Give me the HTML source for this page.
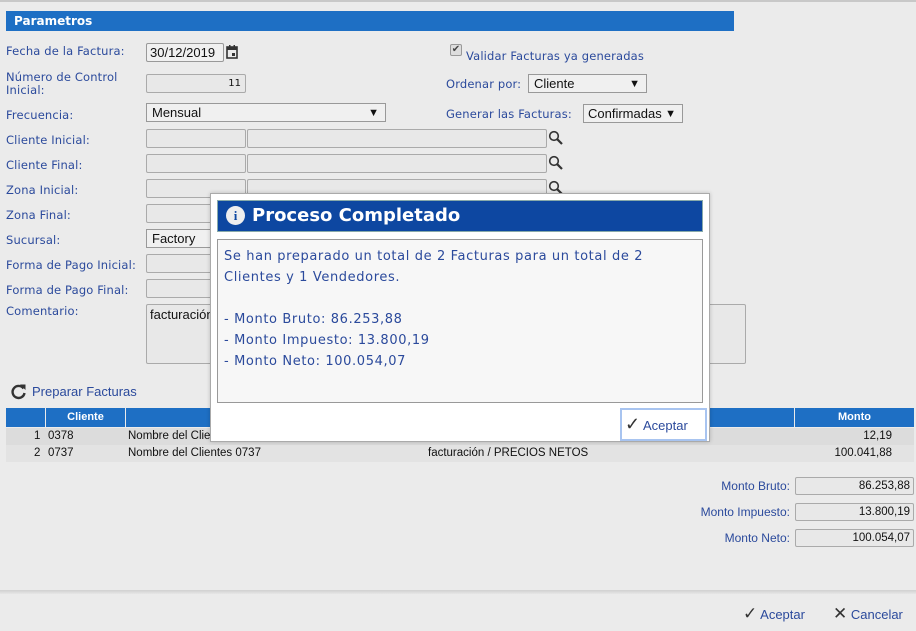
<!DOCTYPE html>
<html><head><meta charset="utf-8"><style>
*{box-sizing:border-box}
body{margin:0;width:916px;height:631px;background:#ebebeb;font-family:"DejaVu Sans","Liberation Sans",sans-serif;font-size:12px;color:#2b4a9c;position:relative;overflow:hidden}
.a{position:absolute}
.lbl{position:absolute;left:6px;font-size:11.5px;color:#2b4a9c;line-height:13px;letter-spacing:0.15px}
.in{position:absolute;border:1px solid #aaa;background:#e8e8e8;border-radius:2px;height:19px}
.sel{position:absolute;border:1px solid #999;background:#f0f0f0;height:19px;font-family:"Liberation Sans",sans-serif;font-size:13px;color:#111;padding:1px 5px;line-height:16px}
.sel:after{content:"▼";position:absolute;right:6px;top:1px;font-size:11px}
.tbl{font-family:"Liberation Sans",sans-serif;font-size:11.5px;color:#111}
.th{position:absolute;top:408px;height:19px;background:#1e6fc4;color:#fff;font-weight:bold;font-family:"Liberation Sans",sans-serif;font-size:11px;text-align:center;line-height:19px}
</style></head><body>
<div class="a" style="left:0;top:0;width:916px;height:2px;background:#c8c8c8"></div>
<div class="a" style="left:6px;top:11px;width:728px;height:20px;background:#1e6fc4;color:#fff;font-weight:bold;font-size:12px;line-height:20px;padding-left:8px">Parametros</div>

<div class="lbl" style="top:45px">Fecha de la Factura:</div>
<div class="in" style="left:146px;top:43px;width:78px;background:#f0f0f0;border-color:#999;font-family:'Liberation Sans',sans-serif;font-size:13px;color:#111;padding-left:3px;line-height:17px">30/12/2019</div>
<svg class="a" style="left:226px;top:45px" width="12" height="14" viewBox="0 0 12 14"><rect x="1" y="2" width="10" height="11" fill="none" stroke="#333" stroke-width="1.6"/><rect x="1" y="2" width="10" height="3" fill="#333"/><rect x="3" y="0" width="1.5" height="3" fill="#333"/><rect x="7.5" y="0" width="1.5" height="3" fill="#333"/><rect x="6" y="8" width="3" height="3" fill="#333"/></svg>

<div class="lbl" style="top:71px">Número de Control<br>Inicial:</div>
<div class="in" style="left:146px;top:74px;width:100px;font-size:10px;color:#111;text-align:right;padding-right:4px;line-height:17px">11</div>

<div class="lbl" style="top:109px">Frecuencia:</div>
<div class="sel" style="left:146px;top:103px;width:240px">Mensual</div>

<div class="lbl" style="top:134px">Cliente Inicial:</div>
<div class="lbl" style="top:159px">Cliente Final:</div>
<div class="lbl" style="top:184px">Zona Inicial:</div>
<div class="lbl" style="top:209px">Zona Final:</div>
<div class="lbl" style="top:234px">Sucursal:</div>
<div class="lbl" style="top:259px">Forma de Pago Inicial:</div>
<div class="lbl" style="top:284px">Forma de Pago Final:</div>
<div class="lbl" style="top:305px">Comentario:</div>

<div class="in" style="left:146px;top:129px;width:100px"></div><div class="in" style="left:247px;top:129px;width:300px"></div>
<div class="in" style="left:146px;top:154px;width:100px"></div><div class="in" style="left:247px;top:154px;width:300px"></div>
<div class="in" style="left:146px;top:179px;width:100px"></div><div class="in" style="left:247px;top:179px;width:300px"></div>
<div class="in" style="left:146px;top:204px;width:100px"></div>
<div class="sel" style="left:146px;top:229px;width:100px">Factory</div>
<div class="in" style="left:146px;top:254px;width:100px"></div>
<div class="in" style="left:146px;top:279px;width:100px"></div>
<div class="in" style="left:146px;top:304px;width:600px;height:60px;font-family:'Liberation Sans',sans-serif;font-size:13px;color:#111;padding:2px 3px">facturación</div>
<svg class="a" style="left:548px;top:130px" width="16" height="16" viewBox="0 0 16 16"><circle cx="6" cy="6" r="4.3" fill="none" stroke="#333" stroke-width="1.6"/><path d="M9.2 9.2L14 14" stroke="#333" stroke-width="2.2"/></svg>
<svg class="a" style="left:548px;top:155px" width="16" height="16" viewBox="0 0 16 16"><circle cx="6" cy="6" r="4.3" fill="none" stroke="#333" stroke-width="1.6"/><path d="M9.2 9.2L14 14" stroke="#333" stroke-width="2.2"/></svg>
<svg class="a" style="left:548px;top:180px" width="16" height="16" viewBox="0 0 16 16"><circle cx="6" cy="6" r="4.3" fill="none" stroke="#333" stroke-width="1.6"/><path d="M9.2 9.2L14 14" stroke="#333" stroke-width="2.2"/></svg>

<div class="a" style="left:450px;top:44px;width:12px;height:12px;border:1px solid #999;background:#ddd;border-radius:2px;font-size:10px;line-height:10px;color:#444;text-align:center">✔</div>
<div class="lbl" style="left:466px;top:50px">Validar Facturas ya generadas</div>
<div class="lbl" style="left:446px;top:78px">Ordenar por:</div>
<div class="sel" style="left:528px;top:74px;width:119px">Cliente</div>
<div class="lbl" style="left:446px;top:108px">Generar las Facturas:</div>
<div class="sel" style="left:583px;top:104px;width:100px;padding-left:4px">Confirmadas</div>

<svg class="a" style="left:10px;top:383px" width="17" height="17" viewBox="0 0 17 17"><path d="M13.5 5.5A6 6 0 1 0 14.5 10" fill="none" stroke="#333" stroke-width="2.4"/><path d="M10 1.5L15.5 1.5L15.5 7Z" fill="#333"/></svg>
<div class="a tbl" style="left:32px;top:384px;font-size:13px;color:#2b4a9c">Preparar Facturas</div>

<div class="th" style="left:6px;width:39px"></div>
<div class="th" style="left:46px;width:79px">Cliente</div>
<div class="th" style="left:126px;width:668px"></div>
<div class="th" style="left:795px;width:119px">Monto</div>
<div class="a tbl" style="left:6px;top:428px;width:908px;height:17px;background:#dcdcdc;line-height:17px">
<span class="a" style="left:28px">1</span><span class="a" style="left:42px">0378</span><span class="a" style="left:122px">Nombre del Clientes 0378</span><span class="a" style="right:22px">12,19</span></div>
<div class="a tbl" style="left:6px;top:445px;width:908px;height:17px;background:#e3e3e3;line-height:17px">
<span class="a" style="left:28px">2</span><span class="a" style="left:42px">0737</span><span class="a" style="left:122px">Nombre del Clientes 0737</span><span class="a" style="left:422px">facturación / PRECIOS NETOS</span><span class="a" style="right:22px">100.041,88</span></div>

<div class="a tbl" style="right:126px;top:479px;color:#2b4a9c;font-size:12px">Monto Bruto:</div>
<div class="a tbl" style="right:126px;top:505px;color:#2b4a9c;font-size:12px">Monto Impuesto:</div>
<div class="a tbl" style="right:126px;top:531px;color:#2b4a9c;font-size:12px">Monto Neto:</div>
<div class="in tbl" style="left:795px;top:477px;width:119px;height:18px;text-align:right;padding-right:3px;line-height:16px">86.253,88</div>
<div class="in tbl" style="left:795px;top:503px;width:119px;height:18px;text-align:right;padding-right:3px;line-height:16px">13.800,19</div>
<div class="in tbl" style="left:795px;top:529px;width:119px;height:18px;text-align:right;padding-right:3px;line-height:16px">100.054,07</div>

<div class="a" style="left:0;top:590px;width:916px;height:4px;background:linear-gradient(#d0d0d0,#e6e6e6)"></div>
<div class="a tbl" style="left:743px;top:605px;font-size:13px;color:#2b4a9c;line-height:17px"><span style="color:#333;font-size:17px">✓</span> Aceptar</div>
<div class="a tbl" style="left:833px;top:605px;font-size:13px;color:#2b4a9c;line-height:17px"><span style="color:#333;font-size:17px">✕</span> Cancelar</div>

<!-- dialog -->
<div class="a" style="left:210px;top:193px;width:500px;height:249px;background:#fff;border:1px solid #aaa;box-shadow:0 0 4px rgba(0,0,0,.2)"></div>
<div class="a" style="left:217px;top:200px;width:486px;height:32px;background:#0d47a1;border:1px solid #8aa"></div>
<div class="a" style="left:226px;top:206px;width:19px;height:19px;border-radius:50%;background:#eee;color:#0d47a1;font-weight:bold;font-size:13px;text-align:center;line-height:19px;font-family:'Liberation Serif',serif">i</div>
<div class="a" style="left:252px;top:205px;color:#fff;font-weight:bold;font-size:18px;line-height:22px">Proceso Completado</div>
<div class="a" style="left:217px;top:239px;width:486px;height:164px;background:#f7f7f7;border:1px solid #999;padding:6px 6px;font-size:13px;line-height:21px;color:#2b4a9c;letter-spacing:0.62px;white-space:nowrap">Se han preparado un total de 2 Facturas para un total de 2<br>Clientes y 1 Vendedores.<br><br>- Monto Bruto: 86.253,88<br>- Monto Impuesto: 13.800,19<br>- Monto Neto: 100.054,07</div>
<div class="a tbl" style="left:620px;top:408px;width:87px;height:33px;border:2px solid #a8c4f0;background:#fff;font-size:13px;color:#2b4a9c;line-height:29px;padding-left:3px"><span style="color:#333;font-size:18px">✓</span> Aceptar</div>
</body></html>
